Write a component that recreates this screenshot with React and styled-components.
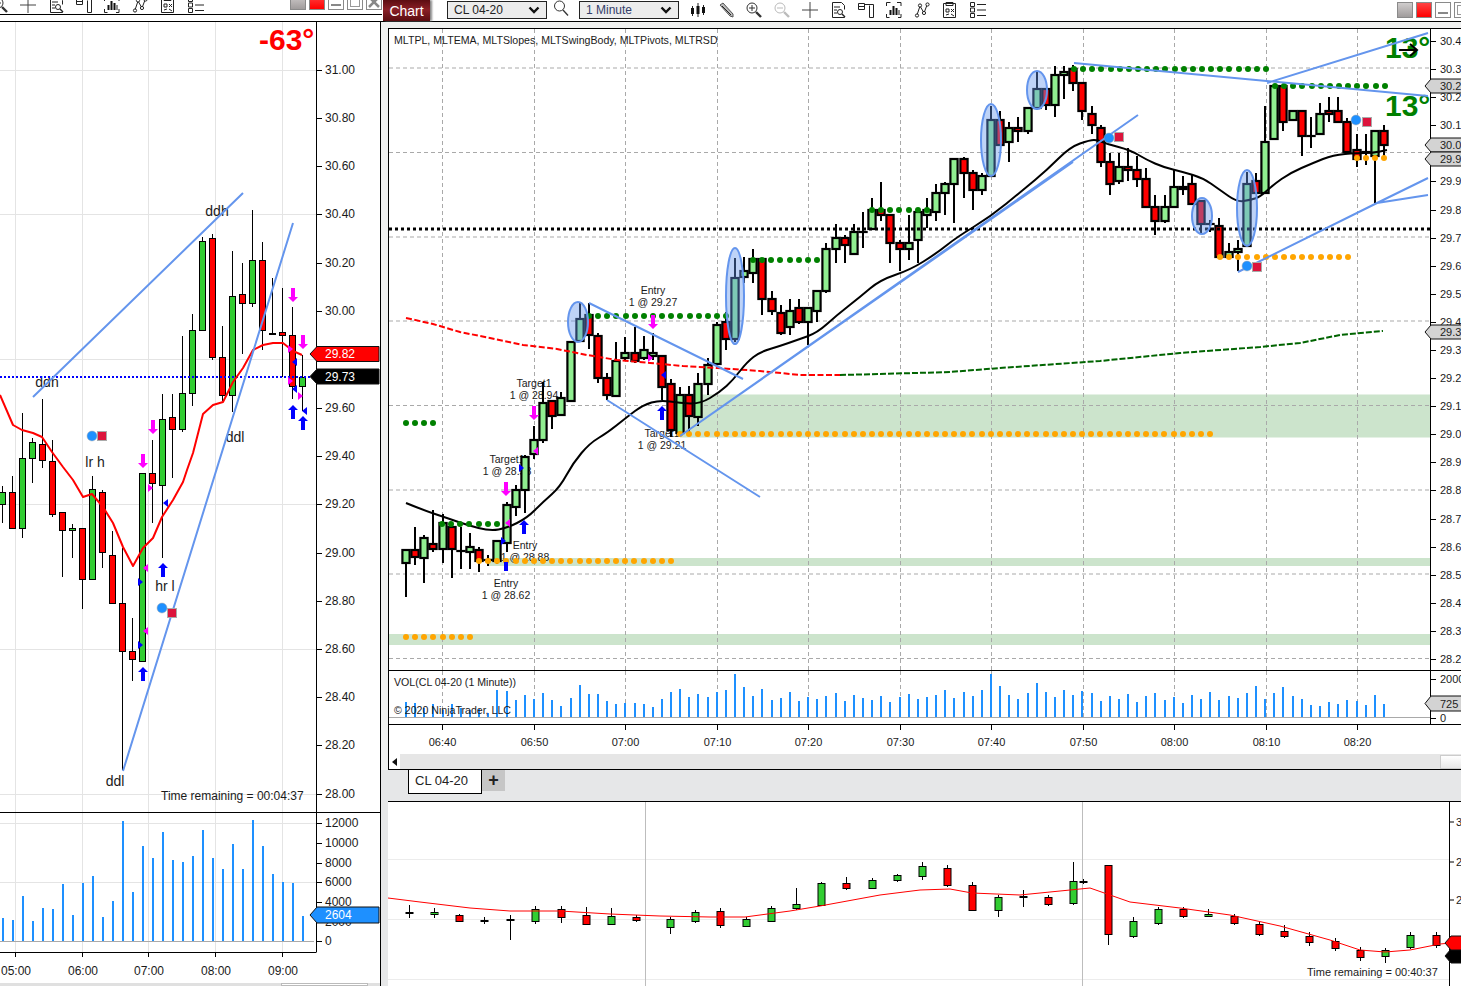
import React from 'react'
import styled, { createGlobalStyle } from 'styled-components'

const Global = createGlobalStyle`
  html, body { margin: 0; padding: 0; background: #e6e7e8; }
  * { box-sizing: border-box; }
`
const Page = styled.div`
  width: 1461px;
  height: 986px;
  display: flex;
  overflow: hidden;
  font-family: "Liberation Sans", Arial, sans-serif;
  background: #f0f1f0;
`
const LeftWindow = styled.div`
  width: 381px;
  flex: none;
  display: flex;
  flex-direction: column;
  background: #fff;
  border-right: 1px solid #000;
`
const LeftBar = styled.div`
  height: 15px;
  margin-right: -2px;
  flex: none;
  display: flex;
  align-items: flex-end;
  justify-content: space-between;
  padding-bottom: 1px;
  overflow: hidden;
  border-bottom: 1px solid #000;
  position: relative;
  z-index: 1;
  background: #fff;
`
const LeftGap = styled.div`
  height: 7px;
  flex: none;
  background: #fff;
  border-bottom: 1px solid #000;
  margin-right: -1px;
`
const IconRow = styled.div`
  display: flex;
  align-items: flex-end;
  gap: ${p => p.$gap}px;
  margin-left: ${p => p.$left}px;
`
const WindowButtons = styled.div`
  display: flex;
  align-items: ${p => p.$top ? 'flex-start' : 'flex-end'};
  gap: 3px;
  flex: none;
  margin: ${p => p.$top ? '2px -28px 0 auto' : '0 0 3px 0'};
`
const WinBtn = styled.div`
  width: 16px;
  height: 16px;
  flex: none;
  border: 1px solid #8a8a8a;
  background: ${p => p.$bg || '#fff'};
  display: flex;
  align-items: center;
  justify-content: center;
`
const Pane = styled.div`
  flex: none;
  height: ${p => p.$h}px;
  background: #fff;
  border-top: ${p => p.$line ? '1px solid #000' : '0'};
  overflow: hidden;
`
const Chart = styled.svg`
  display: block;
  text {
    font-family: "Liberation Sans", Arial, sans-serif;
    fill: #1a1a1a;
  }
`
const LeftScroll = styled.div`
  flex: 1;
  background: #e0e0e0;
  padding-left: 281px;
`
const LeftThumb = styled.div`
  width: 87px;
  height: 100%;
  background: #fff;
  border: 1px solid #bbb;
`
const RightSide = styled.div`
  flex: 1;
  min-width: 0;
  display: flex;
  flex-direction: column;
`
const TopBar = styled.div`
  height: 22px;
  flex: none;
  display: flex;
  align-items: flex-start;
  background: #fff;
  border-bottom: 1px solid #000;
`
const ChartTab = styled.div`
  width: 47px;
  height: 21px;
  margin-left: 2px;
  flex: none;
  display: flex;
  align-items: center;
  justify-content: center;
  color: #fff;
  font-size: 14px;
  background: linear-gradient(#5c0d12, #8a1f26 45%, #5a0c10);
  box-shadow: 2px 0 2px #888;
`
const Select = styled.div`
  width: 100px;
  height: 18px;
  margin-top: 1px;
  margin-left: ${p => p.$left}px;
  flex: none;
  display: flex;
  align-items: center;
  justify-content: space-between;
  padding: 0 6px;
  font-size: 12px;
  color: ${p => p.$color};
  background: #ececec;
  border: 1px solid #222;
`
const ToolIcons = styled.div`
  display: flex;
  align-items: center;
  gap: 12px;
  margin: 2px 0 0 ${p => p.$left}px;
  height: 16px;
`
const Stripe = styled.div`
  height: 6px;
  flex: none;
  background: #f0f1f0;
`
const Frame = styled.div`
  flex: none;
  margin-left: 7px;
  border-top: 1px solid #000;
  border-left: 1px solid #000;
  background: #fff;
`
const ScrollRow = styled.div`
  height: 16px;
  display: flex;
  justify-content: space-between;
  background: #e6e6e6;
  border-bottom: 1px solid #000;
`
const ScrollBtn = styled.div`
  width: 11px;
  height: 15px;
  display: flex;
  align-items: center;
  justify-content: center;
  background: #fff;
`
const ScrollThumb = styled.div`
  width: 21px;
  height: 14px;
  margin-top: 1px;
  border: 1px solid #ccc;
  border-right: 0;
  background: linear-gradient(#fff, #e8e8e8);
`
const TabBar = styled.div`
  height: 31px;
  flex: none;
  display: flex;
  align-items: flex-start;
  padding-left: 27px;
  background: #e6e7e8;
`
const Tab = styled.div`
  width: 74px;
  height: 24px;
  flex: none;
  display: flex;
  align-items: center;
  padding: 0 0 2px 6px;
  font-size: 13px;
  color: #222;
  background: #fff;
  border: 1px solid #000;
  border-top: 0;
`
const AddTab = styled.div`
  width: 23px;
  height: 21px;
  flex: none;
  display: flex;
  align-items: center;
  justify-content: center;
  font-size: 18px;
  font-weight: 700;
  color: #222;
  background: #c6c6c6;
`
const LowerWrap = styled.div`
  flex: 1;
  padding-left: 7px;
  background: #e6e7e8;
  min-height: 0;
`
const LowerPane = styled.div`
  height: 100%;
  background: #fff;
  border-top: 1px solid #000;
  overflow: hidden;
`

const Line = ({ children, w = 16 }) => (
  <svg width={w} height="16" viewBox="0 0 16 16" fill="none" stroke="#222" strokeWidth="1">{children}</svg>
)
const CandleIcon = () => (
  <Line>
    <path d="M2.5 4v10M8 1v14M13.5 3v10" />
    <path d="M2.5 6v6M8 4v8M13.5 5v6" strokeWidth="3" stroke="#111" />
  </Line>
)
const PencilIcon = () => (
  <Line>
    <path d="M2 3 5 1l10 11 0 3-3-1z" fill="#bbb" stroke="#555" />
    <path d="M4 4l9 9" stroke="#222" />
  </Line>
)
const ZoomIcon = ({ c = '#333', plus }) => (
  <Line>
    <circle cx="6" cy="6" r="5" stroke={c} />
    <path d={plus ? 'M3 6h6M6 3v6' : 'M3 6h6'} stroke={c} />
    <path d="M10 10l5 5" stroke={c} strokeWidth="2.4" />
  </Line>
)
const CrossIcon = () => <Line><path d="M8 0v16M0 8h16" stroke="#444" /></Line>
const DocIcon = () => (
  <Line>
    <path d="M2.5 15.5V.5h9l3 3v4M14.5 14v1.5h-12" />
    <path d="M4 5h6M4 8h3M4 11h3" />
    <circle cx="10" cy="10" r="2.5" />
    <path d="M12 12l3 3" strokeWidth="1.4" />
  </Line>
)
const PropsIcon = () => (
  <Line>
    <path d="M.5 1.5h6v6h-6zM.5 4.5h6" />
    <path d="M6.5 2.5h9v13h-4v-12" />
  </Line>
)
const BarsIcon = () => (
  <Line>
    <path d="M.5 4V.5h4M11 .5h4V4M.5 12v3.5h3M12 15.5h3V12" />
    <path d="M4.5 8v5M7.5 4v9M10.5 6v7" strokeWidth="2" stroke="#111" />
    <path d="M13 8v5" />
  </Line>
)
const NodesIcon = () => (
  <Line>
    <path d="M3 13 6 4l4 7 3-8" />
    <circle cx="3" cy="13.5" r="1.6" fill="#fff" />
    <circle cx="6" cy="3.5" r="1.6" fill="#fff" />
    <circle cx="10" cy="11" r="1.6" fill="#fff" />
    <circle cx="13.5" cy="2.5" r="1.6" fill="#fff" />
  </Line>
)
const SheetIcon = () => (
  <Line>
    <path d="M1.5 1.5h12v14h-12zM4 .5h7v3H4z" />
    <path d="M4 7h3v3H4zM9 7l3 3M12 7l-3 3M4 13l3-1M9 12l3 2" />
  </Line>
)
const ListIcon = () => (
  <Line>
    <path d="M.5 .5h4v4h-4zM.5 11.5h4v4h-4z" />
    <path d="M7 2.5h9M7 8h9M7 13.5h9" />
    <path d="M.5 6h4v4h-4z" />
  </Line>
)
const Chevron = () => (
  <svg width="12" height="8" viewBox="0 0 12 8"><path d="M1.5 1.5 6 6l4.5-4.5" fill="none" stroke="#111" strokeWidth="2.4" /></svg>
)
const Magnifier = () => (
  <svg width="16" height="16" viewBox="0 0 16 16" fill="none" stroke="#333">
    <circle cx="6.5" cy="6" r="5" /><path d="M10 10l5 5.5" strokeWidth="1.3" />
  </svg>
)

const WindowSet = ({ top }) => (
  <WindowButtons $top={top}>
    <WinBtn $bg="linear-gradient(#d0cdcd,#a09c9c)" />
    <WinBtn $bg="linear-gradient(#f44,#f00)" />
    <WinBtn><svg width="12" height="12"><path d="M1 9h10" stroke="#888" strokeWidth="2" /></svg></WinBtn>
    <WinBtn><svg width="12" height="12"><rect x="1.5" y="1.5" width="9" height="9" fill="none" stroke="#999" /></svg></WinBtn>
    <WinBtn $bg="#fff"><svg width="12" height="12"><path d="M1 1l10 10M11 1 1 11" stroke="#888" strokeWidth="2.5" /></svg></WinBtn>
  </WindowButtons>
)

// pixel data: [bodyTop, bodyBottom, wickTop, wickBottom, g|r]
const mainCandles = [
  [550,563,550,597,'g'],[550,557,527,565,'r'],[538,558,535,583,'g'],[544,549,510,552,'r'],[523,549,514,563,'g'],
  [527,549,525,578,'r'],[551,551,527,569,'r'],[547,552,533,569,'g'],[550,561,547,572,'r'],[560,560,555,566,'r'],
  [541,561,541,564,'g'],[505,543,502,552,'g'],[490,507,485,516,'g'],[457,490,455,513,'g'],[440,454,426,459,'g'],
  [403,440,382,443,'g'],[401,416,401,429,'r'],[398,415,392,416,'g'],[342,401,342,401,'g'],[319,341,303,342,'g'],
  [315,335,303,349,'r'],[336,378,333,383,'r'],[378,395,373,400,'r'],[361,396,342,397,'g'],[353,358,337,361,'g'],
  [353,361,327,363,'r'],[350,358,336,360,'g'],[353,356,333,360,'g'],[356,387,356,400,'r'],[384,430,379,437,'r'],
  [395,433,387,435,'g'],[395,416,386,432,'r'],[384,417,373,426,'g'],[365,384,358,395,'g'],[325,364,322,364,'g'],
  [322,339,312,350,'r'],[278,339,258,342,'g'],[271,277,257,283,'g'],[259,273,249,283,'g'],[259,299,259,315,'r'],
  [299,311,291,315,'r'],[313,333,305,335,'r'],[311,327,299,335,'g'],[308,322,299,324,'r'],[308,322,308,345,'g'],
  [291,311,291,322,'g'],[249,291,243,293,'g'],[238,249,224,263,'g'],[238,245,235,263,'r'],[232,254,224,254,'g'],
  [232,232,212,248,'r'],[210,229,198,229,'g'],[210,215,182,221,'r'],[215,243,215,263,'r'],[243,249,240,271,'r'],
  [243,249,215,260,'g'],[212,240,212,263,'g'],[210,215,198,228,'g'],[193,212,184,221,'g'],[184,193,182,215,'g'],
  [159,184,159,223,'g'],[159,173,157,198,'r'],[173,190,170,210,'r'],[176,190,173,195,'g'],[120,176,106,176,'g'],
  [120,145,111,145,'r'],[128,142,122,162,'g'],[128,131,117,142,'r'],[108,131,108,134,'g'],[89,108,72,110,'g'],
  [89,105,89,110,'r'],[75,105,66,117,'g'],[72,75,66,99,'g'],[69,83,65,91,'r'],[83,111,83,120,'r'],
  [114,125,106,134,'r'],[128,162,125,167,'r'],[162,184,153,195,'r'],[167,181,153,184,'g'],[167,170,148,181,'r'],
  [170,179,156,187,'r'],[179,207,168,207,'r'],[207,221,195,235,'r'],[207,221,195,223,'g'],[187,207,170,207,'g'],
  [187,189,176,195,'g'],[184,204,174,204,'r'],[201,224,201,234,'r'],[224,224,220,232,'r'],[226,257,218,257,'r'],
  [252,257,243,257,'g'],[249,252,240,271,'g'],[184,246,172,246,'g'],[181,193,173,193,'r'],[142,193,106,193,'g'],
  [86,139,86,139,'g'],[86,122,86,131,'r'],[111,120,111,120,'g'],[111,136,111,156,'r'],[136,136,117,148,'r'],
  [114,134,103,134,'g'],[111,114,97,122,'r'],[111,122,97,122,'r'],[122,152,118,152,'r'],[150,159,134,167,'r'],
  [152,152,134,165,'r'],[131,156,131,203,'g'],[131,145,125,157,'r'],
]
const mainX = i => Math.round(406 + i * 9.14)

const leftCandles = [
  [492,504,486,523,'g'],[492,528,476,528,'r'],[458,528,413,538,'g'],[442,458,438,483,'g'],[444,460,399,468,'r'],
  [461,514,440,517,'r'],[512,530,512,577,'r'],[528,530,524,558,'g'],[528,579,528,609,'r'],[489,579,476,579,'g'],
  [492,552,490,568,'r'],[555,603,531,603,'r'],[603,651,548,770,'r'],[651,659,618,681,'r'],[473,661,473,661,'g'],
  [473,483,440,523,'r'],[419,485,394,558,'g'],[417,429,394,478,'r'],[393,429,336,432,'g'],[330,393,314,406,'g'],
  [241,330,237,330,'g'],[238,357,234,360,'r'],[357,395,326,401,'r'],[296,395,251,412,'g'],[294,303,263,354,'r'],
  [260,303,210,307,'g'],[260,330,242,350,'r'],[333,333,278,335,'g'],[332,335,288,377,'r'],[335,386,307,399,'r'],
  [377,386,355,411,'g'],
]
const leftVolTops = [414,420,348,423,384,387,312,405,309,288,411,363,123,336,198,234,156,240,246,228,150,234,267,192,267,120,198,282,306,309,408]
const mainVolTops = [
  702,703,708,704,710,704,708,710,709,713,690,691,700,695,699,693,700,706,698,685,694,694,701,704,703,703,704,707,699,692,689,
  697,694,697,692,690,674,687,696,689,700,698,692,701,697,699,696,693,701,695,698,700,696,702,697,694,699,697,695,690,698,692,696,690,
  674,686,695,699,693,683,692,697,690,695,691,693,701,696,699,694,702,696,693,700,697,703,695,699,692,700,696,698,693,686,699,693,687,696,
  699,705,706,702,704,700,701,705,695,704,
]
const lowerCandles = [
  [409,912,912,905,918,'g'],[434,912,914,908,918,'g'],[459,915,921,914,922,'r'],[484,920,920,917,924,'g'],[510,919,920,915,940,'g'],
  [535,909,921,906,924,'g'],[561,909,917,906,923,'r'],[586,915,924,907,925,'r'],[611,916,924,908,925,'g'],[636,917,920,915,922,'r'],
  [670,919,927,917,934,'g'],[695,912,921,910,923,'g'],[720,911,925,908,928,'r'],[746,919,926,917,927,'g'],[771,908,921,906,922,'g'],
  [796,904,908,888,910,'g'],[821,883,905,882,906,'g'],[846,883,888,877,890,'r'],[872,880,888,878,889,'g'],[897,875,880,874,882,'g'],
  [922,866,876,862,880,'g'],[947,868,885,865,887,'r'],[972,885,910,882,911,'r'],[998,897,910,895,917,'g'],[1023,896,896,890,907,'g'],
  [1048,897,904,895,906,'r'],[1073,881,903,862,905,'g'],[1083,881,881,879,884,'g'],[1108,865,934,865,945,'r'],[1133,921,936,917,938,'g'],
  [1158,909,923,907,925,'g'],[1183,909,916,907,918,'r'],[1208,914,916,909,917,'g'],[1234,916,923,914,925,'r'],[1259,924,934,922,936,'r'],
  [1284,931,936,925,938,'r'],[1309,936,942,932,946,'r'],[1335,941,948,938,951,'r'],[1360,950,957,947,961,'r'],[1385,950,956,948,963,'g'],
  [1410,935,947,932,949,'g'],[1436,935,945,932,948,'r'],
]

const poly = pts => pts.map(p => p.join(',')).join(' ')
// runs a quadratic curve through the midpoints, the averaged lines are smooth in the platform
const smooth = pts => {
  let d = `M${pts[0][0]} ${pts[0][1]}`
  for (let i = 1; i < pts.length - 1; i++) {
    const mx = (pts[i][0] + pts[i + 1][0]) / 2
    const my = (pts[i][1] + pts[i + 1][1]) / 2
    d += `Q${pts[i][0]} ${pts[i][1]} ${mx} ${my}`
  }
  const last = pts[pts.length - 1]
  return `${d}L${last[0]} ${last[1]}`
}
const times = [442,534,625,717,808,900,991,1083,1174,1266,1357]
const timeLabels = ['06:40','06:50','07:00','07:10','07:20','07:30','07:40','07:50','08:00','08:10','08:20']
const hGrid = [68,152.5,237,321,405.5,490,574,658.5]
const prices = [['30.40',41],['30.30',69],['30.20',97],['30.10',125],['29.90',181],['29.80',210],['29.70',238],['29.60',266],['29.50',294],['29.40',322],['29.30',350],['29.20',378],['29.10',406],['29.00',434],['28.90',462],['28.80',490],['28.70',519],['28.60',547],['28.50',575],['28.40',603],['28.30',631],['28.20',659]]
const range = (a, n, step = 9.14) => Array.from({ length: n }, (_, i) => Math.round(a + i * step))

const BLUE = '#6495ed'
const Marker = ({ x, y, sx, sy }) => (
  <>
    <rect x={sx - 4.5} y={sy - 4.5} width="9" height="9" fill="#dc143c" stroke="#aaa" />
    <circle cx={x} cy={y} r="5" fill="#1e90ff" stroke="#aaa" strokeWidth="0.5" />
  </>
)
const Down = ({ x, y, c = '#ff00ff' }) => (
  <polygon fill={c} points={poly([[x - 2, y - 7], [x + 2, y - 7], [x + 2, y + 2], [x + 5, y + 2], [x, y + 7], [x - 5, y + 2], [x - 2, y + 2]])} />
)
const Up = ({ x, y, c = '#0000ff' }) => (
  <polygon fill={c} points={poly([[x - 2, y + 7], [x + 2, y + 7], [x + 2, y - 2], [x + 5, y - 2], [x, y - 7], [x - 5, y - 2], [x - 2, y - 2]])} />
)
const Tri = ({ x, y, dir, c }) => (
  <polygon fill={c} points={dir === 'r' ? poly([[x - 2, y - 4], [x + 3, y], [x - 2, y + 4]]) : poly([[x + 2, y - 4], [x - 3, y], [x + 2, y + 4]])} />
)
const Tag = ({ tip, left, right, y, h, fill, color, size, textX, children }) => (
  <>
    <polygon fill={fill} stroke="#111" points={poly([[tip, y], [left, y - h / 2], [right, y - h / 2], [right, y + h / 2], [left, y + h / 2]])} />
    {children && <text x={textX} y={y + 4} fontSize={size} style={{ fill: color }}>{children}</text>}
  </>
)
const Label = ({ x, y, size = 10.5, children }) => <text x={x} y={y} fontSize={size} textAnchor="middle">{children}</text>
const Order = ({ x, y, a, b }) => (
  <>
    <Label x={x} y={y}>{a}</Label>
    <Label x={x} y={y + 12}>{b}</Label>
  </>
)

const LeftCandle = ({ i, c }) => {
  const x = 2 + i * 10
  return (
    <g>
      <path d={`M${x + 0.5} ${c[2]}V${c[3]}`} stroke="#000" />
      <rect x={x - 2.5} y={c[0] + 0.5} width="6" height={Math.max(c[1] - c[0], 1)} fill={c[4] === 'g' ? '#32cd32' : '#ff0000'} stroke="#000" />
    </g>
  )
}
const MainCandle = ({ i, c }) => {
  const x = mainX(i)
  return (
    <g>
      <path d={`M${x} ${c[2]}V${c[3]}`} stroke="#000" strokeWidth="2" />
      <rect x={x - 3.6} y={c[0]} width="7.2" height={Math.max(c[1] - c[0], 0.01)} fill={c[4] === 'g' ? '#90ee90' : '#ff0000'} stroke="#000" strokeWidth="2.2" />
    </g>
  )
}
const LowerCandle = ({ c }) => (
  <g>
    <path d={`M${c[0] + 0.5} ${c[3]}V${c[4]}`} stroke="#000" />
    <rect x={c[0] - 3} y={c[1] + 0.5} width="7" height={Math.max(c[2] - c[1], 1)} fill={c[5] === 'g' ? '#32cd32' : '#ff0000'} stroke="#000" />
  </g>
)

const LeftChart = () => {
  const labels = [['31.00',70],['30.80',118],['30.60',166],['30.40',214],['30.20',263],['30.00',311],['29.60',408],['29.40',456],['29.20',504],['29.00',553],['28.80',601],['28.60',649],['28.40',697],['28.20',745],['28.00',794]]
  return (
    <Chart width="380" height="790" viewBox="0 22 380 790">
      {[15,82,148,215,282].map(x => <path key={x} d={`M${x + 0.5} 22V812`} stroke="#e4e4e4" />)}
      {[70,214,359,504,649,794].map(y => <path key={y} d={`M0 ${y + 0.5}H316`} stroke="#e4e4e4" />)}
      <path d="M316.5 22V812" stroke="#000" />
      {labels.map(([t, y]) => (
        <g key={t}>
          <path d={`M317 ${y + 0.5}h5`} stroke="#000" />
          <text x="325" y={y + 4} fontSize="12">{t}</text>
        </g>
      ))}
      <text x="259" y="50" fontSize="30" fontWeight="700" style={{ fill: '#ff0000' }}>-63°</text>
      <Label x={217} y={216} size={14}>ddh</Label>
      <Label x={47} y={387} size={14}>ddn</Label>
      <Label x={235} y={442} size={14}>ddl</Label>
      <Label x={95} y={467} size={14}>lr h</Label>
      <Label x={165} y={591} size={14}>hr l</Label>
      <Label x={115} y={786} size={14}>ddl</Label>
      <text x="161" y="800" fontSize="12">Time remaining = 00:04:37</text>
      {leftCandles.map((c, i) => <LeftCandle key={i} i={i} c={c} />)}
      <path d="M0 377H316" stroke="#0000ff" strokeWidth="2" strokeDasharray="2 2" />
      <polyline fill="none" stroke="#ff0000" strokeWidth="2" strokeLinejoin="round" points={poly([[0,395],[13,425],[22,430],[33,433],[42,437],[52,452],[63,467],[73,480],[83,497],[92,494],[103,507],[113,523],[123,547],[133,566],[143,548],[153,538],[162,517],[173,500],[183,482],[187,470],[193,453],[203,414],[213,405],[223,402],[233,382],[243,368],[253,350],[263,345],[273,343],[283,343],[293,351],[302,355]])} />
      <path d="M33 397 243 193M123 771 293 223" stroke={BLUE} strokeWidth="2" />
      <Marker x={92} y={436} sx={102} sy={436} />
      <Marker x={162} y={608} sx={172} sy={613} />
      <Down x={293} y={295} /><Down x={303} y={342} /><Down x={153} y={427} /><Down x={143} y={461} />
      <Up x={293} y={412} /><Up x={303} y={423} /><Up x={143} y={674} /><Up x={163} y={570} />
      <Tri x={150} y={488} dir="r" c="#ff00ff" /><Tri x={146} y={568} dir="l" c="#ff00ff" /><Tri x={146} y={631} dir="l" c="#ff00ff" />
      <Tri x={140} y={582} dir="r" c="#0000ff" /><Tri x={140} y={645} dir="r" c="#0000ff" /><Tri x={166} y={503} dir="l" c="#0000ff" />
      <Tri x={290} y={349} dir="r" c="#ff00ff" /><Tri x={290} y={381} dir="r" c="#ff00ff" /><Tri x={300} y={396} dir="r" c="#ff00ff" />
      <Tri x={295} y={362} dir="l" c="#0000ff" /><Tri x={295} y={389} dir="l" c="#0000ff" /><Tri x={305} y={411} dir="l" c="#0000ff" />
      <Tag tip={310} left={317} right={379} y={354} h={15} fill="#ff0000" color="#fff" size={12} textX={325}>29.82</Tag>
      <Tag tip={310} left={317} right={379} y={376.5} h={15} fill="#000" color="#fff" size={12} textX={325}>29.73</Tag>
    </Chart>
  )
}

const LeftVolume = () => {
  const labels = [['12000',823],['10000',843],['8000',863],['6000',882],['4000',902],['2000',922],['0',941]]
  return (
    <Chart width="380" height="170" viewBox="0 813 380 170">
      {[15,82,148,215,282].map(x => <path key={x} d={`M${x + 0.5} 813V952`} stroke="#e4e4e4" />)}
      {[823,882].map(y => <path key={y} d={`M0 ${y + 0.5}H316`} stroke="#e4e4e4" />)}
      <path d="M0 941.5H314" stroke="#a9a9a9" />
      {leftVolTops.map((v, i) => <rect key={i} x={2 + i * 10} y={780 + v / 3} width="2" height={941 - 780 - v / 3} fill="#1e90ff" />)}
      <path d="M316.5 813V952M0 952.5H316.5" stroke="#000" />
      {labels.map(([t, y]) => (
        <g key={t}>
          <path d={`M317 ${y + 0.5}h5`} stroke="#000" />
          <text x="325" y={y + 4} fontSize="12">{t}</text>
        </g>
      ))}
      <Tag tip={310} left={317} right={379} y={915} h={16} fill="#1e90ff" color="#fff" size={12} textX={325}>2604</Tag>
      {[[15,'05:00'],[82,'06:00'],[148,'07:00'],[215,'08:00'],[282,'09:00']].map(([x, t]) => (
        <g key={t}>
          <path d={`M${x + 0.5} 952v5`} stroke="#000" />
          <Label x={x + 1} y={975} size={12}>{t}</Label>
        </g>
      ))}
    </Chart>
  )
}

const greenDots = [
  ...range(406, 4).map(x => [x, 423]),
  ...range(442, 7).map(x => [x, 524]),
  ...range(589, 16).map(x => [x, 316]),
  ...range(753, 8).map(x => [x, 260]),
  ...range(872, 7).map(x => [x, 210]),
  ...range(1074, 22).map(x => [x, 69]),
  ...range(1275, 13).map(x => [x, 86]),
]
const orangeDots = [
  ...range(406, 8).map(x => [x, 637]),
  ...range(479, 22).map(x => [x, 561]),
  ...range(680, 59).map(x => [x, 434]),
  ...range(1220, 15).map(x => [x, 257]),
  ...range(1357, 4).map(x => [x, 158]),
]
const blackEma = [[406,503],[423,510],[447,518],[467,525],[490,531],[507,528],[527,518],[543,502],[560,487],[573,463],[590,443],[607,433],[627,417],[643,405],[660,400],[680,403],[700,404],[720,392],[733,380],[747,362],[760,352],[780,346],[797,340],[817,333],[837,315],[860,297],[880,280],[910,270],[937,253],[957,237],[990,217],[1023,190],[1047,170],[1070,147],[1090,140],[1098,140],[1107,144],[1130,150],[1147,160],[1163,167],[1183,172],[1203,178],[1220,190],[1237,202],[1250,200],[1260,197],[1273,185],[1290,173],[1313,163],[1333,155],[1357,153],[1373,153],[1387,150]]

const MainChart = () => (
  <Chart width="1072" height="641" viewBox="389 29 1072 641">
    <rect x="680" y="394.5" width="750" height="43" fill="#cce4cc" />
    <rect x="488" y="558" width="942" height="8" fill="#cce4cc" />
    <rect x="389" y="634" width="1041" height="11" fill="#cce4cc" />
    {times.map(x => <path key={x} d={`M${x + 0.5} 29V670`} stroke="#a9a9a9" strokeDasharray="4 3" />)}
    {hGrid.map(y => <path key={y} d={`M389 ${y}H1430`} stroke="#a9a9a9" strokeDasharray="4 3" />)}
    <text x="394" y="44" fontSize="10.6">MLTPL, MLTEMA, MLTSlopes, MLTSwingBody, MLTPivots, MLTRSD</text>
    <Order x={653} y={294} a="Entry" b="1 @ 29.27" />
    <Order x={534} y={387} a="Target1" b="1 @ 28.94" />
    <Order x={507} y={463} a="Target1" b="1 @ 28.58" />
    <Order x={662} y={437} a="Target1" b="1 @ 29.21" />
    <Order x={525} y={549} a="Entry" b="1 @ 28.88" />
    <Order x={506} y={587} a="Entry" b="1 @ 28.62" />
    {mainCandles.map((c, i) => <MainCandle key={i} i={i} c={c} />)}
    <polyline fill="none" stroke="#ff0000" strokeWidth="2" strokeDasharray="6 2.5" points={poly([[406,318],[433,324],[460,332],[490,338],[523,345],[557,349],[587,355],[617,360],[650,363],[683,366],[717,368],[760,371],[800,375],[840,375]])} />
    <polyline fill="none" stroke="#006400" strokeWidth="2" strokeDasharray="6 2" points={poly([[840,375],[880,374],[950,372],[1000,368],[1100,361],[1180,353],[1260,347],[1300,343],[1340,335],[1383,331]])} />
    <path d={smooth(blackEma)} fill="none" stroke="#000" strokeWidth="2" />
    <path d="M389 229H1430" stroke="#000" strokeWidth="3" strokeDasharray="3 3" />
    {greenDots.map(([x, y], i) => <circle key={i} cx={x} cy={y} r="3" fill="#008000" />)}
    {orangeDots.map(([x, y], i) => <circle key={i} cx={x} cy={y} r="3" fill="#ffa500" />)}
    <text x="1385" y="58" fontSize="30" fontWeight="700" style={{ fill: '#008000' }}>13°</text>
    <text x="1385" y="116" fontSize="30" fontWeight="700" style={{ fill: '#008000' }}>13°</text>
    <path d="M1399 50h17M1410 44l7 6-7 6" fill="none" stroke="#000" strokeWidth="2" />
    <path d="M1074 63 1428 96M1267 83 1428 33M1238 272 1377 203 1428 178M1377 203 1428 195M680 436 1138 115M680 436 1073 162M589 303 743 379M607 400 760 497" stroke={BLUE} strokeWidth="2" fill="none" />
    {[[578,322,10,20],[735,296,9,48],[991,140,10,36],[1037,90,10,19],[1202,216,10,18],[1247,208,10,38]].map(([cx, cy, rx, ry]) => (
      <ellipse key={cx} cx={cx} cy={cy} rx={rx} ry={ry} fill="rgba(100,149,237,.42)" stroke={BLUE} strokeWidth="2" />
    ))}
    <Marker x={1109} y={138} sx={1119} sy={137} />
    <Marker x={1356} y={120} sx={1367} sy={122} />
    <Marker x={1247} y={266} sx={1257} sy={267} />
    <Down x={534} y={413} /><Down x={506} y={489} /><Down x={653} y={322} />
    <Up x={524} y={527} /><Up x={662} y={413} />
    <rect x="504" y="562" width="4" height="9" fill="#0000ff" />
    <Tri x={536} y={451} dir="l" c="#ff00ff" /><Tri x={508} y={523} dir="l" c="#ff00ff" /><Tri x={650} y={358} dir="r" c="#ff00ff" />
    <Tri x={521} y={468} dir="r" c="#0000ff" /><Tri x={664} y={375} dir="l" c="#0000ff" /><Tri x={503} y={541} dir="r" c="#0000ff" />
    <path d="M1430.5 29V670" stroke="#000" />
    {prices.map(([t, y]) => (
      <g key={t}>
        <path d={`M1431 ${y + 0.5}h5`} stroke="#000" />
        <text x="1440" y={y + 4} fontSize="11">{t}</text>
      </g>
    ))}
    {[['30.24',86],['30.04',145],['29.96',159],['29.34',332]].map(([t, y]) => (
      <Tag key={t} tip={1425} left={1431} right={1470} y={y} h={14} fill="#d3d3d3" color="#222" size={11} textX={1440}>{t}</Tag>
    ))}
  </Chart>
)

const MainVolume = () => (
  <Chart width="1072" height="53" viewBox="389 671 1072 53">
    {times.map(x => <path key={x} d={`M${x + 0.5} 671V720`} stroke="#a9a9a9" strokeDasharray="4 3" />)}
    <path d="M389 717.5H1430" stroke="#a9a9a9" />
    {mainVolTops.map((y, i) => <rect key={i} x={mainX(i) - 1} y={y} width="2" height={717 - y} fill="#1e90ff" />)}
    <text x="394" y="686" fontSize="10.6">VOL(CL 04-20 (1 Minute))</text>
    <text x="394" y="714" fontSize="10.6">© 2020 NinjaTrader, LLC</text>
    <path d="M1430.5 671V724" stroke="#000" />
    <path d="M1431 679.5h5M1431 718.5h5" stroke="#000" />
    <text x="1440" y="683" fontSize="11">2000</text>
    <text x="1440" y="722" fontSize="11">0</text>
    <Tag tip={1425} left={1431} right={1470} y={703.5} h={15} fill="#d3d3d3" color="#222" size={11} textX={1440}>725</Tag>
  </Chart>
)

const TimeAxis = () => (
  <Chart width="1072" height="29" viewBox="389 725 1072 29">
    {times.map((x, i) => (
      <g key={x}>
        <path d={`M${x + 0.5} 725v5`} stroke="#000" />
        <Label x={x + 0.5} y={746} size={11}>{timeLabels[i]}</Label>
      </g>
    ))}
  </Chart>
)

const LowerChart = () => (
  <Chart width="1073" height="184" viewBox="388 802 1073 184">
    {[859,919,979].map(y => <path key={y} d={`M388 ${y + 0.5}H1450`} stroke="#ececec" />)}
    {[645,1082].map(x => <path key={x} d={`M${x + 0.5} 802V986`} stroke="#bdbdbd" />)}
    {lowerCandles.map((c, i) => <LowerCandle key={i} c={c} />)}
    <polyline fill="none" stroke="#ff0000" points={poly([[388,898],[420,902],[470,908],[510,911],[560,911],[610,914],[660,916],[710,917],[745,917],[790,911],[820,906],[880,895],[920,890],[950,889],[972,893],[1020,895],[1060,891],[1090,888],[1110,895],[1130,902],[1180,908],[1230,915],[1280,926],[1330,940],[1360,950],[1385,952],[1410,950],[1440,944],[1461,942]])} />
    <text x="1307" y="976" fontSize="11">Time remaining = 00:40:37</text>
    <path d="M1449.5 802V986" stroke="#000" />
    {[['30.0',822],['29.9',862],['29.8',900]].map(([t, y]) => (
      <g key={t}>
        <path d={`M1450 ${y}h4`} stroke="#000" />
        <text x="1456" y={y + 4} fontSize="11">{t}</text>
      </g>
    ))}
    <Tag tip={1445} left={1451} right={1470} y={956} h={14} fill="#000" />
    <Tag tip={1445} left={1451} right={1470} y={943} h={14} fill="#ff0000" />
  </Chart>
)

const toolIcons = (
  <>
    <CandleIcon /><PencilIcon /><ZoomIcon plus /><ZoomIcon c="#bbb" /><CrossIcon /><DocIcon /><PropsIcon /><BarsIcon /><NodesIcon /><SheetIcon /><ListIcon />
  </>
)

export default function App() {
  return (
    <Page>
      <Global />
      <LeftWindow>
        <LeftBar>
          <IconRow $left={-8} $gap={12}>
            <ZoomIcon /><CrossIcon /><DocIcon /><PropsIcon /><BarsIcon /><NodesIcon /><SheetIcon /><ListIcon />
          </IconRow>
          <WindowSet />
        </LeftBar>
        <LeftGap />
        <Pane $h={790}><LeftChart /></Pane>
        <Pane $h={171} $line><LeftVolume /></Pane>
        <LeftScroll><LeftThumb /></LeftScroll>
      </LeftWindow>
      <RightSide>
        <TopBar>
          <ChartTab>Chart</ChartTab>
          <Select $left={17} $color="#222">CL 04-20<Chevron /></Select>
          <IconRow $left={6} $gap={0}><Magnifier /></IconRow>
          <Select $left={10} $color="#34406a">1 Minute<Chevron /></Select>
          <ToolIcons $left={11}>{toolIcons}</ToolIcons>
          <WindowSet top />
        </TopBar>
        <Stripe />
        <Frame>
          <Pane $h={641}><MainChart /></Pane>
          <Pane $h={54} $line><MainVolume /></Pane>
          <Pane $h={30} $line><TimeAxis /></Pane>
          <ScrollRow>
            <ScrollBtn><svg width="6" height="8"><path d="M5 0v8L0 4z" fill="#111" /></svg></ScrollBtn>
            <ScrollThumb />
          </ScrollRow>
        </Frame>
        <TabBar>
          <Tab>CL 04-20</Tab>
          <AddTab>+</AddTab>
        </TabBar>
        <LowerWrap><LowerPane><LowerChart /></LowerPane></LowerWrap>
      </RightSide>
    </Page>
  )
}
